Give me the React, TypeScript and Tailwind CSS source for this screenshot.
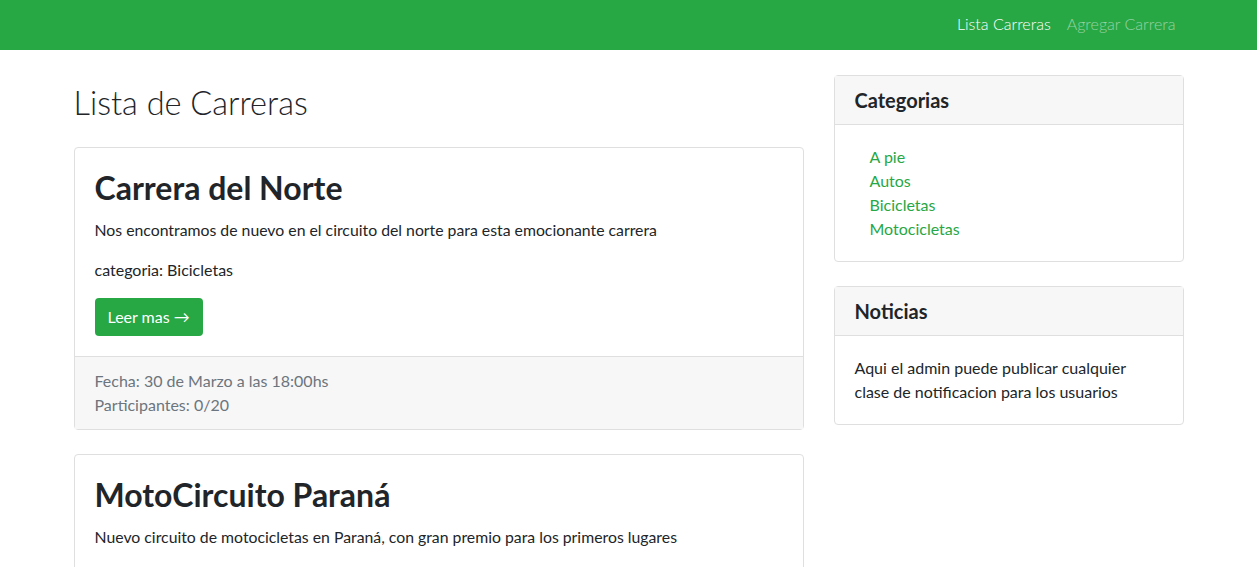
const races = [
  {
    title: "Carrera del Norte",
    text: "Nos encontramos de nuevo en el circuito del norte para esta emocionante carrera",
    categoria: "Bicicletas",
    fecha: "30 de Marzo a las 18:00hs",
    participantes: "0/20",
  },
  {
    title: "MotoCircuito Paraná",
    text: "Nuevo circuito de motocicletas en Paraná, con gran premio para los primeros lugares",
    categoria: "Motocicletas",
    fecha: "12 de Abril a las 10:00hs",
    participantes: "5/30",
  },
];

const categorias = ["A pie", "Autos", "Bicicletas", "Motocicletas"];

const RaceCard = ({ race }: { race: (typeof races)[number] }) => (
  <div className="mb-6 rounded border border-[#dfdfdf] bg-white">
    <div className="p-5">
      <h2 className="mb-[11px] text-[32px] leading-[39px] font-bold text-[#212529]">{race.title}</h2>
      <p className="mb-4 text-[15.8px]">{race.text}</p>
      <p className="mb-4">categoria: {race.categoria}</p>
      <a href="#" className="inline-block rounded bg-[#28a745] px-[13px] py-[7px] leading-6 text-white">
        Leer mas &rarr;
      </a>
    </div>
    <div className="border-t border-[#dfdfdf] bg-[#f7f7f7] px-5 py-3 text-[#6c757d]">
      <div>Fecha: {race.fecha}</div>
      <div>Participantes: {race.participantes}</div>
    </div>
  </div>
);

export default function App() {
  return (
    <div className="min-h-screen bg-white text-base leading-6 font-normal text-[#212529] [font-family:Lato,'Liberation_Sans',sans-serif]">
      <nav className="h-[50px] bg-[#28a745]">
        <div className="mx-auto flex h-full max-w-[1140px] items-center justify-end px-[15px] pb-[3px]">
          <a href="#" className="px-2 font-light text-white">Lista Carreras</a>
          <a href="#" className="px-2 font-light text-white/50">Agregar Carrera</a>
        </div>
      </nav>

      <div className="mx-auto mt-[25px] flex max-w-[1140px]">
        <div className="w-2/3 px-[15px]">
          <h1 className="mt-[9px] mb-[25px] text-[32.5px] leading-[38px] font-light">Lista de Carreras</h1>
          {races.map((r) => (
            <RaceCard key={r.title} race={r} />
          ))}
        </div>

        <div className="w-1/3 px-[15px]">
          <div className="mb-6 rounded border border-[#dfdfdf]">
            <div className="border-b border-[#dfdfdf] bg-[#f7f7f7] px-5 py-3">
              <h5 className="text-xl leading-6 font-bold">Categorias</h5>
            </div>
            <div className="p-5">
              <ul className="pl-[15px]">
                {categorias.map((c) => (
                  <li key={c}>
                    <a href="#" className="text-[#28a745]">{c}</a>
                  </li>
                ))}
              </ul>
            </div>
          </div>

          <div className="rounded border border-[#dfdfdf]">
            <div className="border-b border-[#dfdfdf] bg-[#f7f7f7] px-5 py-3">
              <h5 className="text-xl leading-6 font-bold">Noticias</h5>
            </div>
            <div className="p-5 pr-[45px]">
              <p>Aqui el admin puede publicar cualquier clase de notificacion para los usuarios</p>
            </div>
          </div>
        </div>
      </div>
    </div>
  );
}
